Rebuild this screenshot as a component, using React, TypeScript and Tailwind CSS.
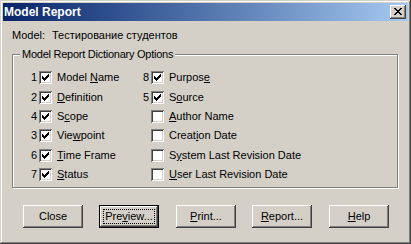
import type { ReactNode } from "react";

const face = "bg-[#d4d0c8]";

type Option = { num?: string; label: ReactNode };

const rows: { h: string; left: Option; right: Option }[] = [
  {
    h: "h-[20px]",
    left: { num: "1", label: <>Model <u>N</u>ame</> },
    right: { num: "8", label: <>Purpos<u>e</u></> },
  },
  {
    h: "h-[19px]",
    left: { num: "2", label: <><u>D</u>efinition</> },
    right: { num: "5", label: <>S<u>o</u>urce</> },
  },
  {
    h: "h-[19px]",
    left: { num: "4", label: <>S<u>c</u>ope</> },
    right: { label: <><u>A</u>uthor Name</> },
  },
  {
    h: "h-[20px]",
    left: { num: "3", label: <>Vie<u>w</u>point</> },
    right: { label: <>Creat<u>i</u>on Date</> },
  },
  {
    h: "h-[19px]",
    left: { num: "6", label: <><u>T</u>ime Frame</> },
    right: { label: <>S<u>y</u>stem Last Revision Date</> },
  },
  {
    h: "h-[19px]",
    left: { num: "7", label: <><u>S</u>tatus</> },
    right: { label: <><u>U</u>ser Last Revision Date</> },
  },
];

const buttons: { ml: string; label: ReactNode; isDefault?: boolean }[] = [
  { ml: "ml-[20px]", label: "Close" },
  { ml: "ml-[16px]", label: <>Pre<u>v</u>iew...</>, isDefault: true },
  { ml: "ml-[17px]", label: <><u>P</u>rint...</> },
  { ml: "ml-[16px]", label: <><u>R</u>eport...</> },
  { ml: "ml-[17px]", label: <><u>H</u>elp</> },
];

// classic 7x7 check mark, one 1x3 bar per column
const checkCols = [2, 3, 4, 3, 2, 1, 0];

function CheckBox({ checked }: { checked: boolean }) {
  return (
    <span className="relative block w-[13px] h-[13px] shrink-0 bg-white shadow-[inset_1px_1px_#808080,inset_-1px_-1px_#ffffff,inset_2px_2px_#404040,inset_-2px_-2px_#d4d0c8]">
      {checked && (
        <svg className="absolute left-[3px] top-[3px]" width="7" height="7" viewBox="0 0 7 7" shapeRendering="crispEdges">
          {checkCols.map((y, x) => (
            <rect key={x} x={x} y={y} width="1" height="3" fill="#000" />
          ))}
        </svg>
      )}
    </span>
  );
}

function OptionCell({ opt, className }: { opt: Option; className: string }) {
  return (
    <div className={`flex items-start ${className}`}>
      <span className="w-[8px] text-right leading-[13px]">{opt.num}</span>
      <span className="ml-[2px]">
        <CheckBox checked={!!opt.num} />
      </span>
      <span className="ml-[5px] leading-[13px] whitespace-nowrap">{opt.label}</span>
    </div>
  );
}

// 8x7 close glyph
const xPixels = [
  [0, 0], [1, 0], [6, 0], [7, 0],
  [1, 1], [2, 1], [5, 1], [6, 1],
  [2, 2], [3, 2], [4, 2], [5, 2],
  [3, 3], [4, 3],
  [2, 4], [3, 4], [4, 4], [5, 4],
  [1, 5], [2, 5], [5, 5], [6, 5],
  [0, 6], [1, 6], [6, 6], [7, 6],
];

export default function App() {
  return (
    <div className={`w-[411px] h-[244px] ${face} p-[3px] text-[11px] text-black font-['Liberation_Sans',Arial,sans-serif] shadow-[inset_-1px_-1px_#404040,inset_1px_1px_#d4d0c8,inset_-2px_-2px_#808080,inset_2px_2px_#ffffff]`}>
      {/* title bar */}
      <div className="h-[18px] flex items-center justify-between pl-[1px] pr-[2px] bg-gradient-to-r from-[#0a246a] to-[#a6caf0]">
        <span className="text-white font-bold text-[12px] leading-[14px]">Model Report</span>
        <span className={`relative w-[16px] h-[14px] ${face} shadow-[inset_-1px_-1px_#404040,inset_1px_1px_#ffffff,inset_-2px_-2px_#808080,inset_2px_2px_#d4d0c8]`}>
          <svg className="absolute left-[4px] top-[3px]" width="8" height="7" viewBox="0 0 8 7" shapeRendering="crispEdges">
            {xPixels.map(([x, y]) => (
              <rect key={`${x}-${y}`} x={x} y={y} width="1" height="1" fill="#000" />
            ))}
          </svg>
        </span>
      </div>

      {/* model line */}
      <div className="flex mt-[8px] ml-[9px] leading-[13px]">
        <span className="w-[40px]">Model:</span>
        <span>Тестирование студентов</span>
      </div>

      {/* group box */}
      <div className="relative mt-[12px] ml-[9px] w-[386px] border border-[#808080] shadow-[inset_1px_1px_#ffffff,1px_1px_#ffffff] pt-[16px]">
        <span className={`absolute left-[7px] -top-[7px] px-[2px] leading-[13px] tracking-[-0.25px] ${face}`}>
          Model Report Dictionary Options
        </span>
        {rows.map((r, i) => (
          <div key={i} className={`flex ${r.h}`}>
            <OptionCell opt={r.left} className="w-[128px] pl-[16px]" />
            <OptionCell opt={r.right} className="" />
          </div>
        ))}
      </div>

      {/* buttons */}
      <div className="flex mt-[17px]">
        {buttons.map((b, i) => (
          <div key={i} className={b.ml}>
            {b.isDefault ? (
              <div className="w-[60px] h-[23px] border border-black">
                <div className={`w-full h-full ${face} p-[3px] shadow-[inset_-1px_-1px_#404040,inset_1px_1px_#ffffff,inset_-2px_-2px_#808080,inset_2px_2px_#d4d0c8]`}>
                  <div className="w-full h-full border border-dotted border-black flex items-center justify-center leading-[13px]">
                    {b.label}
                  </div>
                </div>
              </div>
            ) : (
              <div className={`w-[60px] h-[23px] ${face} flex items-center justify-center leading-[13px] shadow-[inset_-1px_-1px_#404040,inset_1px_1px_#ffffff,inset_-2px_-2px_#808080,inset_2px_2px_#d4d0c8]`}>
                {b.label}
              </div>
            )}
          </div>
        ))}
      </div>
    </div>
  );
}
